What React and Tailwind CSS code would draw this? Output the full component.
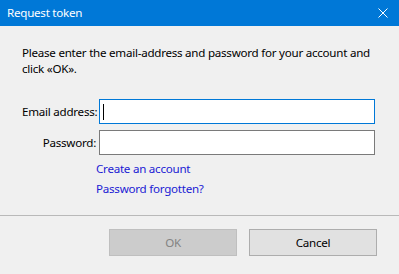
import React from 'react';

const font = { fontFamily: '"Noto Sans", "Open Sans", Arial, sans-serif' };

const CloseIcon = () => (
  <svg width="10" height="10" viewBox="0 0 10 10" className="block">
    <path d="M0.5 0.5 L9.5 9.5 M9.5 0.5 L0.5 9.5" stroke="#ffffff" strokeWidth="1" fill="none" />
  </svg>
);

export default function App() {
  return (
    <div
      className="w-[399px] h-[274px] bg-[#f0f0f0] flex flex-col text-[11.6px] text-black overflow-hidden tracking-[-0.25px]"
      style={font}
    >
      {/* Title bar */}
      <div className="h-[26px] bg-[#0078d7] flex items-center justify-between pl-[7px] pr-[11px] text-white">
        <span className="leading-none">Request token</span>
        <CloseIcon />
      </div>

      {/* Body */}
      <div className="flex-1 px-[22px] pt-[19px]">
        <p className="leading-[16px] whitespace-nowrap">
          Please enter the email-address and password for your account and
          <br />
          click «OK».
        </p>

        <div className="mt-[22px] grid grid-cols-[74px_276px] gap-x-[3px] gap-y-[6px] items-center">
          <label className="text-right leading-none whitespace-nowrap">Email address:</label>
          <div className="h-[25px] border border-[#0078d7] bg-white flex items-center pl-[3px]">
            <div className="w-px h-[16px] bg-black" />
          </div>
          <label className="text-right leading-none whitespace-nowrap">Password:</label>
          <div className="h-[25px] border border-[#7a7a7a] bg-white" />
        </div>

        <div className="ml-[74px] mt-[4px] flex flex-col text-[#1a1ad4] leading-[20px]">
          <span>Create an account</span>
          <span>Password forgotten?</span>
        </div>
      </div>

      {/* Footer */}
      <div className="border-t border-[#b9b9b9] h-[59px] flex justify-end items-start gap-[12px] pr-[22px] pt-[13px]">
        <button className="w-[128px] h-[27px] bg-[#cccccc] border border-[#bfbfbf] text-[#838383] leading-none">
          OK
        </button>
        <button className="w-[128px] h-[27px] bg-[#e1e1e1] border border-[#adadad] text-black leading-none">
          Cancel
        </button>
      </div>
    </div>
  );
}
